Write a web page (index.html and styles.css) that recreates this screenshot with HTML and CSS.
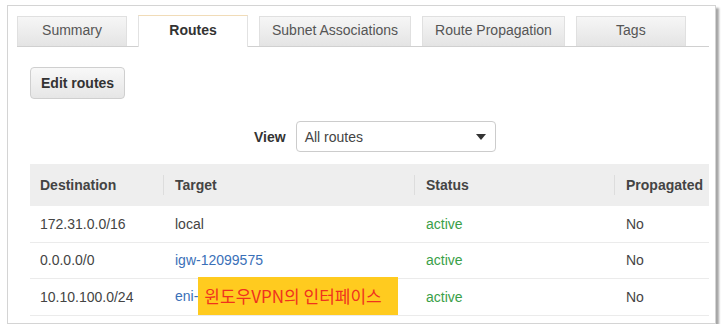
FILE: index.html
```html
<!DOCTYPE html>
<html lang="en">
<head>
    <meta charset="UTF-8">
    <meta name="viewport" content="width=device-width, initial-scale=1.0">
    <title>Route Table</title>
    <link rel="stylesheet" href="styles.css">
</head>
<body>
    <div class="panel">
        <div class="tabs">
            <div class="tab">Summary</div>
            <div class="tab active">Routes</div>
            <div class="tab">Subnet Associations</div>
            <div class="tab">Route Propagation</div>
            <div class="tab">Tags</div>
        </div>

        <div class="content">
            <button class="btn">Edit routes</button>

            <div class="view-row">
                <span class="view-label">View</span>
                <div class="select">
                    <span>All routes</span>
                    <span class="caret"></span>
                </div>
            </div>

            <table class="routes">
                <thead>
                    <tr>
                        <th class="col-dest">Destination</th>
                        <th class="col-target">Target</th>
                        <th class="col-status">Status</th>
                        <th class="col-prop">Propagated</th>
                    </tr>
                </thead>
                <tbody>
                    <tr>
                        <td>172.31.0.0/16</td>
                        <td>local</td>
                        <td class="active-status">active</td>
                        <td>No</td>
                    </tr>
                    <tr>
                        <td>0.0.0.0/0</td>
                        <td><a href="#" class="link">igw-12099575</a></td>
                        <td class="active-status">active</td>
                        <td>No</td>
                    </tr>
                    <tr>
                        <td>10.10.100.0/24</td>
                        <td><a href="#" class="link">eni-</a><span class="note">윈도우VPN의 인터페이스</span></td>
                        <td class="active-status">active</td>
                        <td>No</td>
                    </tr>
                </tbody>
            </table>
        </div>
    </div>
</body>
</html>
```

FILE: styles.css
```css
* {
    margin: 0;
    padding: 0;
    box-sizing: border-box;
}

body {
    font-family: "Liberation Sans", Arial, sans-serif;
    font-size: 14px;
    color: #444;
    background: #fff;
    padding: 5px 0 0 7px;
}

.panel {
    width: 709px;
    border: 1px solid #d4d4d4;
    box-shadow: 3px 3px 2px rgba(0, 0, 0, 0.35);
    padding: 10px 6px 7px 9px;
}

/* tabs */
.tabs {
    display: flex;
    border-bottom: 1px solid #d0d0d0;
}

.tab {
    height: 30px;
    line-height: 27px;
    min-width: 110px;
    padding: 0 12px;
    margin-right: 11px;
    text-align: center;
    color: #555;
    background: linear-gradient(#f6f6f6, #e4e4e4);
    border: 1px solid #e0e0e0;
    border-bottom: none;
}

.tab.active {
    height: 32px;
    line-height: 29px;
    margin-top: -1px;
    margin-bottom: -1px;
    background: #fff;
    border-color: #e2e2e2;
    border-top-color: #f1dcb8;
    font-weight: bold;
    color: #333;
}

.content {
    padding: 20px 0 0 13px;
}

.btn {
    display: block;
    height: 32px;
    padding: 0 10px;
    font-family: inherit;
    font-size: 14px;
    font-weight: bold;
    color: #333;
    white-space: nowrap;
    background: linear-gradient(#f8f8f8, #e6e6e6);
    border: 1px solid #cfcfcf;
    border-radius: 4px;
}

.view-row {
    display: flex;
    align-items: center;
    margin: 22px 0 12px 224px;
}

.view-label {
    font-weight: bold;
    color: #333;
    margin-right: 10px;
}

.select {
    width: 200px;
    height: 31px;
    display: flex;
    align-items: center;
    justify-content: space-between;
    padding: 0 9px 0 8px;
    border: 1px solid #cccccc;
    border-radius: 4px;
    color: #444;
}

.caret {
    width: 0;
    height: 0;
    border-left: 5.5px solid transparent;
    border-right: 5.5px solid transparent;
    border-top: 6px solid #333;
}

/* table */
.routes {
    width: 679px;
    border-collapse: collapse;
    table-layout: fixed;
}

.routes th {
    height: 42px;
    text-align: left;
    padding-left: 12px;
    background: #eeeeee linear-gradient(#dddddd, #dddddd) left center / 1px 20px no-repeat;
    color: #444;
    font-weight: bold;
}

.routes th.col-dest {
    padding-left: 10px;
    background-image: none;
}

.col-dest { width: 133px; }
.col-target { width: 251px; }
.col-status { width: 200px; }
.col-prop { width: 95px; }

.routes td {
    height: 36px;
    padding-left: 12px;
    border-bottom: 1px solid #ebebeb;
    color: #444;
    white-space: nowrap;
}

.routes td:first-child {
    padding-left: 10px;
}

.routes tbody tr:last-child td {
    height: 37px;
}

.link {
    color: #3a70b8;
    text-decoration: none;
}

.active-status {
    color: #3aa048 !important;
}

.note {
    display: inline-block;
    vertical-align: middle;
    width: 200px;
    height: 38px;
    line-height: 38px;
    margin: -12px 0 -10px;
    padding-left: 6px;
    background: #ffcb1f;
    color: #f0321e;
    font-family: "Noto Sans CJK KR", "Liberation Sans", sans-serif;
    font-size: 17px;
}
```
